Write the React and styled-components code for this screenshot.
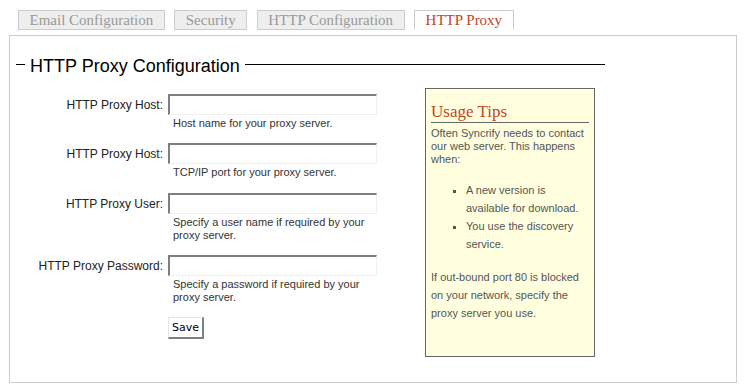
import React from "react";
import styled, { createGlobalStyle } from "styled-components";

// 탭 목록 - active 는 현재 선택된 탭
const tabs = [
  { name: "email", text: "Email Configuration" },
  { name: "security", text: "Security" },
  { name: "http", text: "HTTP Configuration" },
  { name: "proxy", text: "HTTP Proxy", active: true },
];

// 폼 항목 - help 는 입력칸 아래 설명
const fields = [
  { label: "HTTP Proxy Host:", help: "Host name for your proxy server." },
  { label: "HTTP Proxy Host:", help: "TCP/IP port for your proxy server." },
  { label: "HTTP Proxy User:", help: "Specify a user name if required by your proxy server." },
  { label: "HTTP Proxy Password:", help: "Specify a password if required by your proxy server.", type: "password" },
];

const GlobalStyle = createGlobalStyle`
  body {
    margin: 0;
    background: #fff;
    font-family: "Liberation Sans", Arial, sans-serif;
  }
`;

const Page = styled.div`
  padding: 10px 9px 0;
`;

const TabBar = styled.div`
  display: flex;
  gap: 9.5px;
  padding-left: 9px;
  margin-bottom: 5px;
`;

const Tab = styled.div`
  box-sizing: border-box;
  height: 20px;
  padding: 0 10.5px;
  line-height: 18px;
  font-family: "Liberation Serif", "Times New Roman", serif;
  font-size: 15px;
  border: 1px solid #ccc;
  border-bottom-color: ${(p) => (p.$active ? "#fff" : "#ccc")};
  background: ${(p) => (p.$active ? "#fff" : "#eee")};
  color: ${(p) => (p.$active ? "#c4451d" : "#999")};
  cursor: pointer;
`;

const Panel = styled.div`
  border: 1px solid #ccc;
  padding: 15.5px 0 25px 6px;
`;

const FieldSet = styled.fieldset`
  box-sizing: border-box;
  width: 589px;
  margin: 0;
  padding: 0 10px 0 9px;
  border: none;
  border-top: 1px solid #000;
`;

const Legend = styled.legend`
  padding: 4px 5px 0;
  font-size: 18px;
  color: #000;
`;

const Content = styled.div`
  display: flex;
  justify-content: space-between;
  align-items: flex-start;
  padding-top: 11px;
`;

const Form = styled.div`
  display: grid;
  grid-template-columns: 138px 209px;
  column-gap: 5px;
  row-gap: 13.5px;
  margin-top: 6px;
`;

const Label = styled.label`
  text-align: right;
  font-size: 12px;
  line-height: 21px;
  padding-top: 1px;
  color: #222;
  white-space: nowrap;
`;

const Field = styled.div`
  display: flex;
  flex-direction: column;
`;

const Input = styled.input`
  box-sizing: border-box;
  width: 209px;
  height: 21px;
  margin: 0;
  border-style: solid;
  border-width: 2px 1px 1px 2px;
  border-color: #7f7f7f #f0f0f0 #f0f0f0 #7f7f7f;
  background: #fff;
  outline: none;
`;

const Help = styled.div`
  margin-top: 2px;
  padding-left: 5px;
  font-size: 11px;
  line-height: 13px;
  color: #333;
`;

const SaveButton = styled.button`
  grid-column: 2;
  justify-self: start;
  box-sizing: border-box;
  height: 22px;
  margin-top: -1px;
  padding: 0 3px;
  font-family: "DejaVu Sans", Tahoma, sans-serif;
  font-size: 11px;
  color: #000;
  background: #fff;
  border-style: solid;
  border-width: 1px 2px 2px 1px;
  border-color: #e4e4e4 #808080 #808080 #e4e4e4;
  cursor: pointer;
`;

const Tips = styled.div`
  box-sizing: border-box;
  width: 170px;
  height: 269px;
  padding: 5px;
  border: 1px solid #666;
  background: #ffffe0;
  color: #555;
  font-size: 11px;
`;

const TipsTitle = styled.h3`
  margin: 8px 0 0;
  font-family: "Liberation Serif", "Times New Roman", serif;
  font-size: 17px;
  font-weight: normal;
  line-height: 20px;
  color: #c4451d;
  border-bottom: 1px solid #666;
`;

const TipsText = styled.p`
  margin: 4px 0 0;
  line-height: 13px;
`;

const TipsList = styled.ul`
  margin: 15.5px 0 15px;
  padding-left: 35px;
  list-style: square;
  line-height: 18px;
`;

const TipsNote = styled.p`
  margin: 0;
  line-height: 18px;
`;

const App = () => {
  return (
    <Page>
      <GlobalStyle />
      <TabBar>
        {tabs.map((t) => (
          <Tab key={t.name} $active={t.active}>
            {t.text}
          </Tab>
        ))}
      </TabBar>
      <Panel>
        <FieldSet>
          <Legend>HTTP Proxy Configuration</Legend>
          <Content>
            <Form>
              {fields.map((f, i) => (
                <React.Fragment key={i}>
                  <Label>{f.label}</Label>
                  <Field>
                    <Input type={f.type || "text"} />
                    <Help>{f.help}</Help>
                  </Field>
                </React.Fragment>
              ))}
              <SaveButton>Save</SaveButton>
            </Form>
            <Tips>
              <TipsTitle>Usage Tips</TipsTitle>
              <TipsText>
                Often Syncrify needs to contact our web server. This happens when:
              </TipsText>
              <TipsList>
                <li>A new version is available for download.</li>
                <li>You use the discovery service.</li>
              </TipsList>
              <TipsNote>
                If out-bound port 80 is blocked on your network, specify the proxy server you use.
              </TipsNote>
            </Tips>
          </Content>
        </FieldSet>
      </Panel>
    </Page>
  );
};

export default App;
